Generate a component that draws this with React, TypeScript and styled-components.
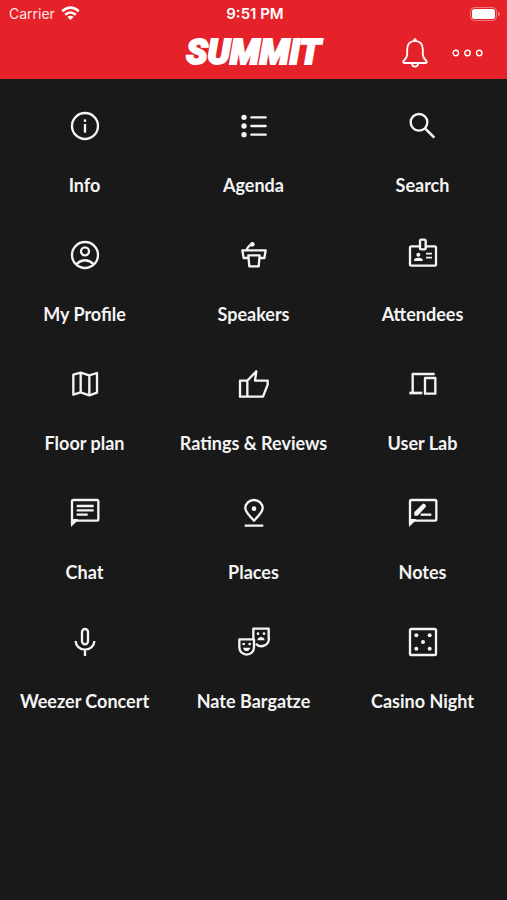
import React from "react";
import styled, { createGlobalStyle } from "styled-components";

const GlobalStyle = createGlobalStyle`
  *, *::before, *::after { box-sizing: border-box; }
  body { margin: 0; background: #191919; }
`;

const Page = styled.div`
  min-height: 100vh;
  display: flex;
  flex-direction: column;
  background: #191919;
  color: #f4f4f4;
  border-bottom: 1px solid #1c161a;
  font-family: Lato, "Liberation Sans", sans-serif;
`;

const Header = styled.header`
  background: #e5222a;
  color: #fff;
`;

const TripleRow = styled.div`
  display: grid;
  grid-template-columns: 1fr auto 1fr;
  align-items: center;
`;

const StatusBar = styled(TripleRow)`
  height: 27px;
  padding: 0 6px 0 9px;
  font: 400 14px/20px Inter, "Liberation Sans", sans-serif;
`;

const Carrier = styled.div`
  display: flex;
  align-items: center;
  gap: 6px;
  color: #ffe3e4;
`;

const Clock = styled.time`
  font-size: 15px;
  font-weight: 600;
`;

const End = styled.div`
  display: flex;
  justify-content: flex-end;
  align-items: center;
  gap: 16px;
`;

const NavBar = styled(TripleRow)`
  height: 52px;
  padding: 0 20px;
`;

const Logo = styled.h1`
  grid-column: 2;
  margin: 0;
  font: italic 900 35px/40px Roboto, "Liberation Sans", sans-serif;
  -webkit-text-stroke: 2px #fff;
`;

const IconButton = styled.button`
  display: flex;
  align-items: center;
  justify-content: center;
  height: 40px;
  padding: 0 4px;
  border: 0;
  background: none;
  color: inherit;
  cursor: pointer;
`;

const Grid = styled.nav`
  display: grid;
  grid-template-columns: repeat(3, minmax(0, 1fr));
  padding-top: 4px;
`;

const Tile = styled.a`
  display: flex;
  flex-direction: column;
  align-items: center;
  gap: 30px;
  height: 129px;
  padding-top: 26px;
  color: inherit;
  text-decoration: none;
`;

const Glyph = styled.svg`
  flex: none;
  width: 34px;
  height: 34px;
  fill: none;
  stroke: currentColor;
  stroke-width: 7;
  stroke-linejoin: round;

  .solid { fill: currentColor; stroke: none; }
  .thick { stroke-width: 8; }
  .thin { stroke-width: 5; }
  .round { stroke-linecap: round; }
`;

const Label = styled.span`
  font-size: 18px;
  line-height: 24px;
  font-weight: 700;
  white-space: nowrap;
`;

const Bubble = () => (
  <>
    <path d="M-39 33V-35Q-39-39-35-39H36Q40-39 40-35V19Q40 23 36 23H-27Z" />
    <path className="solid" d="M-42 42V18H-20Z" />
  </>
);

const dot = (x: number, y: number, r: number) => (
  <circle key={`${x},${y}`} className="solid" cx={x} cy={y} r={r} />
);

const items: { label: string; art: React.ReactNode }[] = [
  {
    label: "Info",
    art: (
      <>
        <circle r="39" />
        {dot(0, -16, 4)}
        <path d="M0-6V20" />
      </>
    ),
  },
  {
    label: "Agenda",
    art: (
      <>
        {[-26, 0, 26].map((y) => dot(-30, y, 8))}
        <path className="round" d="M-8-26H35M-8 0H35M-8 26H35" />
      </>
    ),
  },
  {
    label: "Search",
    art: (
      <>
        <circle cx="-12" cy="-11" r="25" />
        <path className="thick" d="M6 7L34 35" />
      </>
    ),
  },
  {
    label: "My Profile",
    art: (
      <>
        <circle r="39" />
        <circle cy="-11" r="12" />
        <path d="M-27 28Q0 4 27 28" />
      </>
    ),
  },
  {
    label: "Speakers",
    art: (
      <>
        <path d="M-17 9H-31L-35-14H35L31 9H17M-17 1H17L14 34H-14ZM-23-14Q-17-29-6-32" />
        {dot(-5, -32, 7)}
      </>
    ),
  },
  {
    label: "Attendees",
    art: (
      <>
        <path d="M-9-26H-35Q-39-26-39-22V28Q-39 32-35 32H35Q39 32 39 28V-22Q39-26 35-26H8" />
        <rect x="-9" y="-46" width="17" height="29" rx="4" />
        {dot(-14, -1, 6)}
        <path className="solid" d="M-27 18V14Q-26 8-14 8Q-2 8-1 14V18Z" />
        <path className="thin" d="M9-4H27M9 8H27" />
      </>
    ),
  },
  {
    label: "Floor plan",
    art: <path d="M-35-28L-13-34L13-26L36-33V26L13 34L-13 25L-35 32ZM-13-34V25M13-26V34" />,
  },
  {
    label: "Ratings & Reviews",
    art: <path d="M-20-10H-42V38H-20ZM-20-10L7-38L3-10H41V2L27 38H-20" />,
  },
  {
    label: "User Lab",
    art: (
      <>
        <path d="M35-30H-31V26" />
        <path className="thick" d="M-41 27H-2" />
        <rect x="6" y="-18" width="31" height="47" />
      </>
    ),
  },
  {
    label: "Chat",
    art: (
      <>
        <Bubble />
        <path d="M-25-21H26M-25-8H26M-25 5H8" />
      </>
    ),
  },
  {
    label: "Places",
    art: (
      <>
        <path d="M0 23C-17 6-26-4-26-14A26 25 0 0 1 26-14C26-4 17 6 0 23ZM-28 38H28" />
        {dot(0, -13, 7)}
      </>
    ),
  },
  {
    label: "Notes",
    art: (
      <>
        <Bubble />
        <path className="solid" d="M-26 8V-3L-1-27Q2-30 5-27L8-24Q10-21 8-18L-16 8Z" />
        <path d="M-7 5H25" />
      </>
    ),
  },
  {
    label: "Weezer Concert",
    art: (
      <>
        <rect x="-9" y="-39" width="18" height="46" rx="9" />
        <path d="M-28-3A28 26 0 0 0 28-3M0 23V42" />
      </>
    ),
  },
  {
    label: "Nate Bargatze",
    art: (
      <>
        <path d="M-44-8H0V16A22 22 0 0 1-44 16ZM-2-10V-40H44V-14A22 22 0 0 1 6 5" />
        {dot(-31, 6, 4)}
        {dot(-13, 6, 4)}
        {dot(12, -25, 4)}
        {dot(30, -25, 4)}
        <path className="solid" d="M-33 17H-11Q-14 27-22 27T-33 17ZM10-5Q12-15 21-15T32-5Z" />
      </>
    ),
  },
  {
    label: "Casino Night",
    art: (
      <>
        <rect x="-39" y="-39" width="78" height="78" rx="4" />
        {dot(-20, -20, 6)}
        {dot(20, -20, 6)}
        {dot(0, 0, 6)}
        {dot(-20, 20, 6)}
        {dot(20, 20, 6)}
      </>
    ),
  },
];

const Wifi = () => (
  <svg width="19" height="15" viewBox="0 0 19 15" fill="none" stroke="#fff" strokeWidth="2.6" aria-label="Wi-Fi">
    <path d="M1.2 5.3Q9.5-2 17.8 5.3M4.2 8.8Q9.5 4.2 14.8 8.8" />
    <path d="M9.5 14L6.4 10.9Q9.5 8.4 12.6 10.9Z" fill="#fff" stroke="none" />
  </svg>
);

const Battery = () => (
  <svg width="31" height="14" viewBox="0 0 31 14" aria-label="Battery full">
    <rect x="0.5" y="0.5" width="26" height="13" rx="4" fill="none" stroke="#fff" strokeOpacity="0.4" />
    <rect x="2" y="2" width="23" height="10" rx="2.5" fill="#fff" />
    <path d="M28.2 4.8Q30 5.5 30 7T28.2 9.2Z" fill="#fff" fillOpacity="0.5" />
  </svg>
);

const Bell = () => (
  <svg width="26" height="30" viewBox="0 0 26 30" fill="none" stroke="currentColor" strokeWidth="1.8" strokeLinejoin="round">
    <path d="M13 2.8C8 2.8 5.2 6.5 5.2 11V16C5.2 19.5 3.8 21 1.6 23Q0.4 24.9 2.4 25H23.6Q25.6 24.9 24.4 23C22.2 21 20.8 19.5 20.8 16V11C20.8 6.5 18 2.8 13 2.8Z" />
    <path d="M10 25.2Q10 28.6 13 28.6T16 25.2" />
    <circle cx="13" cy="1.8" r="1.6" fill="currentColor" stroke="none" />
  </svg>
);

const More = () => (
  <svg width="31" height="8" viewBox="0 0 31 8" fill="none" stroke="currentColor" strokeWidth="1.4">
    <circle cx="3.8" cy="4" r="2.7" />
    <circle cx="15.5" cy="4" r="2.7" />
    <circle cx="27.2" cy="4" r="2.7" />
  </svg>
);

export default function App() {
  return (
    <Page>
      <GlobalStyle />
      <Header>
        <StatusBar>
          <Carrier>
            Carrier
            <Wifi />
          </Carrier>
          <Clock>9:51 PM</Clock>
          <End>
            <Battery />
          </End>
        </StatusBar>
        <NavBar>
          <Logo>SUMMIT</Logo>
          <End>
            <IconButton aria-label="Notifications">
              <Bell />
            </IconButton>
            <IconButton aria-label="More">
              <More />
            </IconButton>
          </End>
        </NavBar>
      </Header>
      <Grid>
        {items.map(({ label, art }) => (
          <Tile key={label} href="#">
            <Glyph viewBox="-51 -51 102 102" aria-hidden="true">
              {art}
            </Glyph>
            <Label>{label}</Label>
          </Tile>
        ))}
      </Grid>
    </Page>
  );
}
